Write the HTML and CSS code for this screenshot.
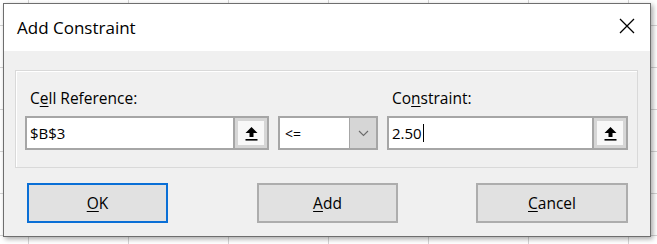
FILE: index.html
```html
<!DOCTYPE html>
<html lang="en">
<head>
    <meta charset="UTF-8">
    <title>Add Constraint</title>
    <link rel="stylesheet" href="styles.css">
</head>
<body>
    <div class="dialog">
        <div class="titlebar">
            <span class="title">Add Constraint</span>
            <svg class="close" width="16" height="16" viewBox="0 0 16 16">
                <path d="M1 1 L15 15 M15 1 L1 15" stroke="#000" stroke-width="1.3" fill="none"/>
            </svg>
        </div>
        <div class="content">
            <div class="group">
                <label class="lbl">C<u>e</u>ll Reference:</label>
                <span></span>
                <label class="lbl">Co<u>n</u>straint:</label>

                <div class="field">
                    <span class="value">$B$3</span>
                    <span class="pick">
                        <svg width="13" height="15" viewBox="0 0 13 15">
                            <path d="M6.5 1 L12.5 7 L8.5 7 L8.5 11 L4.5 11 L4.5 7 L0.5 7 Z" fill="#000"/>
                            <rect x="0.5" y="13" width="12" height="1.6" fill="#000"/>
                        </svg>
                    </span>
                </div>
                <div class="combo">
                    <span class="value op">&lt;=</span>
                    <span class="drop">
                        <svg width="11" height="7" viewBox="0 0 11 7">
                            <path d="M1 1 L5.5 5.5 L10 1" stroke="#6b6b6b" stroke-width="1.1" fill="none"/>
                        </svg>
                    </span>
                </div>
                <div class="field">
                    <span class="value">2.50<span class="caret"></span></span>
                    <span class="pick">
                        <svg width="13" height="15" viewBox="0 0 13 15">
                            <path d="M6.5 1 L12.5 7 L8.5 7 L8.5 11 L4.5 11 L4.5 7 L0.5 7 Z" fill="#000"/>
                            <rect x="0.5" y="13" width="12" height="1.6" fill="#000"/>
                        </svg>
                    </span>
                </div>
            </div>

            <div class="actions">
                <button class="btn btn-ok"><u>O</u>K</button>
                <button class="btn btn-add"><u>A</u>dd</button>
                <button class="btn btn-cancel"><u>C</u>ancel</button>
            </div>
        </div>
    </div>
</body>
</html>
```

FILE: styles.css
```css
html, body {
    height: 100%;
}
body {
    margin: 0;
    font-family: "Open Sans", "Noto Sans", sans-serif;
    color: #000;
    background-color: #fff;
    background-image:
        linear-gradient(to right, #d4d4d4 1px, transparent 1px),
        linear-gradient(to bottom, #d4d4d4 1px, transparent 1px);
    background-size: 100px 42px;
    background-position: 28px 25px;
}
.dialog {
    margin: 3px 0 0 3px;
    width: 648px;
    height: 234px;
    box-sizing: border-box;
    border: 1px solid #6e6e6e;
    background-color: #f0f0f0;
    box-shadow: 2px 2px 5px rgba(0,0,0,0.35);
    display: flex;
    flex-direction: column;
}
.titlebar {
    height: 47px;
    background-color: #fff;
    display: flex;
    align-items: center;
    justify-content: space-between;
    padding: 0 15px 0 13px;
}
.title {
    font-size: 17px;
}
.close {
    margin-bottom: 4px;
}
.content {
    flex: 1;
    padding: 19px 12px 0 11px;
}
.group {
    display: grid;
    grid-template-columns: 244px 100px 241px;
    column-gap: 9px;
    row-gap: 7px;
    padding: 17px 9px 17px 9px;
    border: 1px solid #d9d9d9;
    box-shadow: inset 1px 1px 0 #fff;
}
.lbl {
    font-size: 15.5px;
    line-height: 21px;
    margin-left: 5px;
}
.lbl u, .btn u {
    text-decoration-thickness: 1px;
    text-underline-offset: 2px;
}
.field, .combo {
    height: 34px;
    box-sizing: border-box;
    border: 2px solid #a6a6a6;
    background-color: #fff;
    display: flex;
    align-items: stretch;
}
.value {
    flex: 1;
    display: flex;
    align-items: center;
    padding-left: 3px;
    font-size: 15px;
}
.value.op {
    font-size: 14px;
    padding-left: 5px;
}
.caret {
    display: inline-block;
    width: 1px;
    height: 18px;
    background-color: #000;
    margin-left: 1px;
}
.pick {
    width: 32px;
    border-left: 2px solid #a6a6a6;
    background-color: #f8f8f8;
    box-shadow: inset 0 0 0 3px #d6d6d6;
    display: flex;
    align-items: center;
    justify-content: center;
}
.drop {
    width: 26px;
    border-left: 1px solid #a6a6a6;
    background-color: #d6d6d6;
    display: flex;
    align-items: center;
    justify-content: center;
}
.actions {
    display: flex;
    margin-top: 15px;
    padding-left: 12px;
}
.btn {
    height: 40px;
    width: 141px;
    font-family: "Open Sans", "Noto Sans", sans-serif;
    font-size: 15.5px;
    color: #000;
    background-color: #e1e1e1;
    border: 2px solid #adadad;
    padding: 0;
}
.btn-ok {
    border-color: #0a6fd6;
}
.btn-add {
    margin-left: 89px;
}
.btn-cancel {
    margin-left: 78px;
    width: 152px;
}
```
